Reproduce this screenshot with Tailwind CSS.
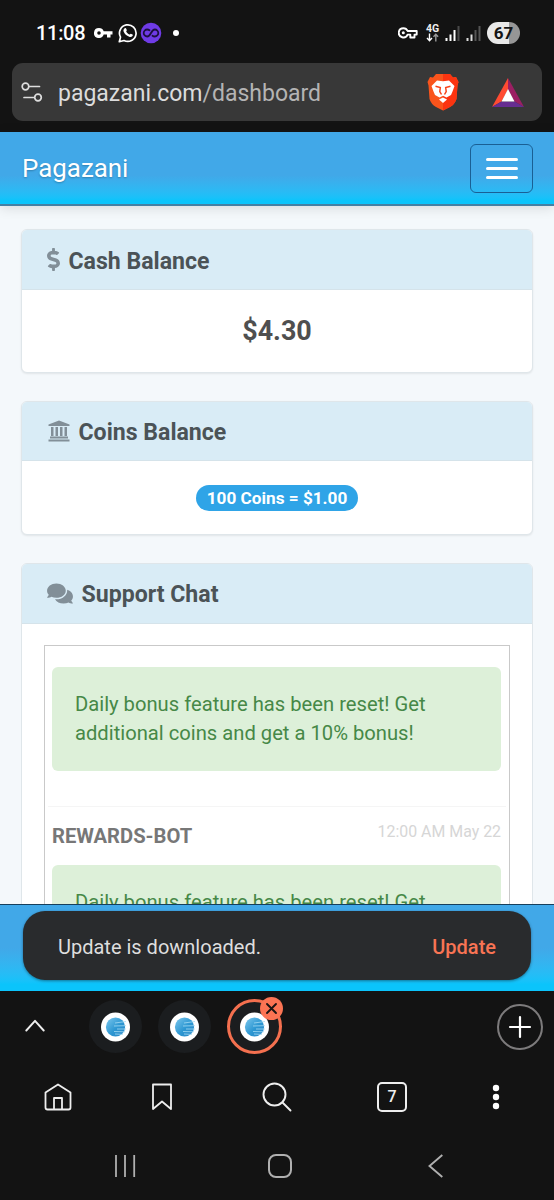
<!DOCTYPE html>
<html lang="en">
<head>
<meta charset="utf-8">
<title>Pagazani</title>
<script src="https://cdn.jsdelivr.net/npm/@tailwindcss/browser@4"></script>
</head>
<body class="w-[554px] h-[1200px] overflow-hidden bg-[#131313] font-['Roboto',sans-serif] flex flex-col whitespace-nowrap">

<svg class="absolute w-0 h-0">
  <defs>
    <linearGradient id="globe" x1="0" y1="0" x2="1" y2="1"><stop offset="0" stop-color="#7cc8ee"/><stop offset=".55" stop-color="#2d97d2"/><stop offset="1" stop-color="#2a86c6"/></linearGradient>
    <symbol id="favicon" viewBox="0 0 30 30">
      <circle cx="14.500" cy="15" r="14.500" fill="#fff"/>
      <circle cx="14.500" cy="15" r="9.600" fill="url(#globe)"/>
      <path d="M14 11l11-1.500M13 14l12-.3M16 17h9M13 19.500l11 .3M14 22l8 .4" stroke="#a5dcf4" stroke-width=".8" fill="none"/>
    </symbol>
  </defs>
</svg>

<!-- Status bar -->
<header class="h-[63px] shrink-0 flex items-center pt-[3px] pl-[36px] pr-[34px] text-white">
  <span class="text-[20px] font-medium leading-none w-[50px] tracking-[-0.3px]">11:08</span>
  <svg class="ml-[8px] w-[19px] h-[12px]" viewBox="0 0 19 12"><path fill="#fff" fill-rule="evenodd" d="M5 1a5 5 0 1 0 4.700 6.600H13V10.500H16.500V7.600H18.500V4.200H9.700A5 5 0 0 0 5 1zM5 4.200a1.800 1.800 0 1 1 0 3.600a1.800 1.800 0 0 1 0-3.600z"/></svg>
  <svg class="ml-[5px] w-[20px] h-[20px]" viewBox="0 0 20 20" fill="none"><path d="M1.300 18.700l1.200-4.600A8.300 8.300 0 1 1 6 17.500z" stroke="#fff" stroke-width="1.700" stroke-linejoin="round"/><path d="M6.700 5.300c.6-.5 1.100-.4 1.400.2l.7 1.600c.2.500-.7 1.200-.6 1.500.7 1.400 1.800 2.400 3.200 3 .4.100 1-1 1.400-.9l1.700.8c.5.300.4.900 0 1.500-.8 1-2 1.200-3.300.8-2.700-.9-4.600-2.600-5.600-5.200-.4-1.300 0-2.500 1.100-3.300z" fill="#fff"/></svg>
  <svg class="ml-[2px] w-[22px] h-[22px]" viewBox="0 0 22 22" fill="none"><circle cx="11" cy="11" r="10.300" fill="#6f3be6"/><path d="M9.500 8.200C8.800 7.700 8 7.500 7.200 7.500a3.500 3.500 0 0 0 0 7c3.800 0 3.800-7 7.600-7a3.500 3.500 0 0 1 0 7c-.8 0-1.600-.2-2.300-.7" stroke="#1d1040" stroke-width="1.800" stroke-linecap="round"/></svg>
  <span class="ml-[11px] w-[6px] h-[6px] rounded-full bg-white"></span>
  <svg class="ml-auto w-[20px] h-[12px]" viewBox="0 0 20 12" fill="none"><path d="M5.400 1.200a4.600 4.600 0 1 0 4.200 6.400H12.300V10.500H16.500V7.600H18.700V4H9.600A4.600 4.600 0 0 0 5.400 1.200z" stroke="#fff" stroke-width="1.900" stroke-linejoin="round"/><circle cx="5.300" cy="5.800" r="1.500" fill="#fff"/></svg>
  <div class="ml-[7px] w-[15px] flex flex-col items-center">
    <span class="text-[10.500px] font-bold leading-[9px] text-[#eee]">4G</span>
    <svg class="w-[13px] h-[9px]" viewBox="0 0 13 9" fill="none" stroke-width="1.400"><path d="M3.500 .5V7.500M1 5l2.500 2.700L6 5" stroke="#fff"/><path d="M9.800 8.500V1.500M7.500 3.800l2.300-2.500 2.300 2.500" stroke="#999"/></svg>
  </div>
  <svg class="ml-[5px] w-[15px] h-[15px]" viewBox="0 0 15 15"><g fill="#fff"><path d="M.500 12h2v3h-2zM4.500 8.500h2V15h-2zM8.500 4h2v11h-2z"/></g><path d="M12.500 0h2v15h-2z" fill="#4a4a4a"/></svg>
  <svg class="ml-[6px] w-[15px] h-[15px]" viewBox="0 0 15 15"><path d="M.500 12h2v3h-2zM4.500 8.500h2V15h-2z" fill="#ddd"/><path d="M8.500 4h2v11h-2zM12.500 0h2v15h-2z" fill="#555"/></svg>
  <span class="ml-[6px] w-[33px] h-[22px] rounded-full bg-linear-to-r from-[#e9e9e9] from-[68%] to-[#969696] to-[68%] text-[#151515] text-[17px] font-bold leading-[22.500px] text-center">67</span>
</header>

<!-- Address bar -->
<div class="mx-[12px] h-[58px] shrink-0 rounded-[11px] bg-[#383838] flex items-center pl-[9px] pr-[17px]">
  <svg class="w-[22px] h-[22px]" viewBox="0 0 22 22" fill="none" stroke="#dedede" stroke-width="1.700" stroke-linecap="round"><circle cx="4.500" cy="5.500" r="3.300"/><path d="M8.500 5.500H18.500M3 16.500H13"/><circle cx="17" cy="16.500" r="3.300"/></svg>
  <div class="ml-[15px] text-[23px] leading-none text-[#dcdcdc] pt-[2px]">pagazani.com<span class="text-[#b4b4b4]">/dashboard</span></div>
  <svg class="ml-auto w-[34px] h-[38px]" viewBox="0 0 34 38">
    <path d="M10 1H24L27 4.500L30 4L32.500 9L31.500 12.500L30.500 26Q29 31 24 34L17 37.500L10 34Q5 31 3.500 26L2.500 12.500L1.500 9L4 4L7 4.500Z" fill="#f9541c"/>
    <path d="M17 1H24L27 4.500L30 4L32.500 9L31.500 12.500L30.500 26Q29 31 24 34L17 37.500Z" fill="#fb3410"/>
    <path d="M11 7.500L17 8.300L23 7.500L28.500 13L26.500 18.500L25 22L20.500 24.500L17 22.800L13.500 24.500L9 22L7.500 18.500L5.500 13Z" fill="#fff"/>
    <path d="M17 24.500L21 26.500L17 30L13 26.500Z" fill="#fff"/>
    <path d="M9.500 13.200L14.300 14.500L13.800 18.500L15.500 21.500M24.500 13.200L19.700 14.500L20.200 18.500L18.500 21.500" stroke="#f8431a" stroke-width="1.500" fill="none"/>
  </svg>
  <svg class="ml-[31px] w-[34px] h-[30px] mt-[2px]" viewBox="0 0 34 30"><path d="M17 0L1 29L10.500 23.500L17 11.500Z" fill="#ff4b32"/><path d="M17 0L33 29L23.500 23.500L17 11.500Z" fill="#9b1f63"/><path d="M1 29H33L23.500 23.500H10.500Z" fill="#662d91"/><path d="M17 11L10.500 23.500H23.500Z" fill="#fff"/></svg>
</div>
<div class="h-[11px] shrink-0"></div>

<!-- Site navigation -->
<nav class="relative z-10 h-[74px] shrink-0 border-b-2 border-[#4480a4] bg-linear-to-b from-[#41a8e8] from-[60%] to-[#0bc4fb] to-[95%] flex items-center justify-between pl-[22px] pr-[21px] shadow-[0_2px_12px_rgba(0,0,0,0.12)]">
  <span class="text-[25.900px] leading-none text-white pt-px [text-shadow:0_1px_2px_rgba(0,0,0,0.25)]">Pagazani</span>
  <div class="w-[63px] h-[49px] rounded-[6px] border border-[#1a5f94] flex flex-col items-center justify-center gap-[6px]">
    <span class="w-[32px] h-[3px] rounded-full bg-white"></span>
    <span class="w-[32px] h-[3px] rounded-full bg-white"></span>
    <span class="w-[32px] h-[3px] rounded-full bg-white"></span>
  </div>
</nav>

<!-- Page content -->
<main class="h-[698px] shrink-0 overflow-hidden bg-[#f4f8fb] pl-[21px] pr-[21px] pt-[23px] flex flex-col gap-[28px]">
  <section class="h-[144px] shrink-0 rounded-[6px] border border-[#dfe6ea] bg-white shadow-[0_1px_2px_rgba(0,0,0,0.08)] overflow-hidden flex flex-col">
    <h2 class="h-[60px] shrink-0 bg-[#d9ecf6] border-b border-[#d5e3ea] flex items-center pl-[25px] text-[23.100px] font-bold text-[#4b5357] leading-none">
      <svg class="w-[13px] h-[23px]" viewBox="0 0 288 512" fill="#828f98"><path d="M209.200 233.400l-108-31.600C88.700 198.200 80 186.500 80 173.500c0-16.300 13.200-29.500 29.500-29.500h66.300c12.200 0 24.200 3.700 34.200 10.500 6.100 4.100 14.300 3.100 19.500-2l34.800-34c7.100-6.900 6.100-18.400-1.800-24.500C238 74.800 207.400 64.100 176 64V16c0-8.800-7.200-16-16-16h-32c-8.800 0-16 7.200-16 16v48h-2.500C45.800 64-5.400 118.700.5 183.600c4.200 46.100 39.400 83.600 83.800 96.600l102.500 30c12.500 3.700 21.200 15.300 21.200 28.300 0 16.300-13.200 29.500-29.500 29.500h-66.300C100 368 88 364.300 78 357.500c-6.100-4.100-14.300-3.100-19.500 2l-34.800 34c-7.100 6.900-6.100 18.400 1.800 24.500 24.500 19.200 55.100 29.900 86.500 30v48c0 8.800 7.200 16 16 16h32c8.800 0 16-7.200 16-16v-48.200c46.600-.9 90.300-28.600 105.700-72.700 21.500-61.600-14.600-124.800-72.500-141.700z"/></svg>
      <span class="ml-[8.500px] pt-[4px]">Cash Balance</span>
    </h2>
    <div class="flex-1 flex items-center justify-center text-[26.900px] font-bold leading-none text-[#4f4f4f]">$4.30</div>
  </section>

  <section class="h-[133.500px] shrink-0 rounded-[6px] border border-[#dfe6ea] bg-white shadow-[0_1px_2px_rgba(0,0,0,0.08)] overflow-hidden flex flex-col">
    <h2 class="h-[59px] shrink-0 bg-[#d9ecf6] border-b border-[#d5e3ea] flex items-center pl-[25.500px] text-[23.100px] font-bold text-[#4b5357] leading-none">
      <svg class="w-[22px] h-[22px]" viewBox="0 0 22 22" fill="#828f98"><path d="M11 .500L21.500 4.500V6H.500V4.500ZM3 7H5.500V16H3ZM7.500 7H10V16H7.500ZM12 7H14.500V16H12ZM16.500 7H19V16H16.500ZM2 16.500H20V18.500H2ZM.500 19.500H21.500V21.500H.500Z"/></svg>
      <span class="ml-[9px] pt-[3px]">Coins Balance</span>
    </h2>
    <div class="flex-1 flex items-center justify-center pt-px"><span class="w-[162px] h-[26px] rounded-full bg-[#2fa4e7] text-white text-[17.200px] font-bold leading-[26px] text-center">100 Coins = $1.00</span></div>
  </section>

  <section class="h-[500px] shrink-0 rounded-[6px] border border-[#dfe6ea] bg-white overflow-hidden flex flex-col">
    <h2 class="h-[60px] shrink-0 bg-[#d9ecf6] border-b border-[#d5e3ea] flex items-center pl-[25px] text-[23.100px] font-bold text-[#4b5357] leading-none">
      <svg class="w-[26px] h-[23px]" viewBox="0 0 576 512" fill="#828f98"><path d="M416 192c0-88.400-93.100-160-208-160S0 103.600 0 192c0 34.300 14.100 65.900 38 92-13.400 30.200-35.500 54.200-35.800 54.500-2.200 2.300-2.800 5.700-1.500 8.700S4.800 352 8 352c36.600 0 66.900-12.300 88.700-25 32.200 15.700 70.300 25 111.300 25 114.900 0 208-71.600 208-160zm122 220c23.900-26 38-57.700 38-92 0-66.900-53.500-124.200-129.300-148.100.9 6.600 1.300 13.300 1.300 20.100 0 105.900-107.700 192-240 192-10.800 0-21.300-.8-31.700-1.900C207.800 439.600 281.800 480 368 480c41 0 79.100-9.200 111.300-25 21.800 12.700 52.100 25 88.700 25 3.200 0 6.100-1.900 7.300-4.800 1.300-2.900.7-6.300-1.500-8.700-.3-.3-22.400-24.200-35.800-54.500z"/></svg>
      <span class="ml-[8.500px] pt-[3px]">Support Chat</span>
    </h2>
    <div class="mt-[21.500px] ml-[22px] mr-[22px] h-[450px] shrink-0 border border-[#c9c9c9] pt-[21px]">
      <div class="ml-[7px] mr-[8px] h-[103.500px] rounded-[6px] bg-[#ddf0d9] px-[23px] pt-[22.600px] text-[20.200px] leading-[29.500px] text-[#468847]">Daily bonus feature has been reset! Get<br>additional coins and get a 10% bonus!</div>
      <div class="mx-[3px] mt-[35.500px] h-px bg-[#f5f5f5]"></div>
      <div class="ml-[7px] mr-[8px] h-[58px] flex justify-between leading-none">
        <span class="pt-[19px] text-[20.200px] font-bold text-[#777]">REWARDS-BOT</span>
        <span class="pt-[17px] text-[15.900px] text-[#d6d6d6]">12:00 AM May 22</span>
      </div>
      <div class="ml-[7px] mr-[8px] h-[104px] rounded-[6px] bg-[#ddf0d9] px-[23px] pt-[22.600px] text-[20.200px] leading-[29.500px] text-[#468847]">Daily bonus feature has been reset! Get</div>
    </div>
  </section>
</main>

<!-- Site footer with the update snackbar -->
<footer class="h-[87px] shrink-0 border-t border-[#173f5c] bg-linear-to-b from-[#41a8e8] from-[50%] to-[#0bc4fb] to-[92%] px-[23px] pt-[6px]">
  <div class="h-[69px] rounded-[22px] bg-[#292b2d] shadow-[0_1px_3px_rgba(0,0,0,0.4)] flex items-center justify-between pl-[35px] pr-[35px] text-[20px] leading-none pt-[2px]">
    <span class="text-[#dedede]">Update is downloaded.</span>
    <span class="font-medium text-[#f87454]">Update</span>
  </div>
</footer>

<!-- Tab strip -->
<div class="h-[71px] shrink-0 flex items-center pl-[25px] pr-[11.500px]">
  <svg class="w-[20px] h-[13px] -mt-[2px]" viewBox="0 0 20 13" fill="none" stroke="#eee" stroke-width="1.900" stroke-linecap="round" stroke-linejoin="round"><path d="M1.300 11.500L10 1.800L18.700 11.500"/></svg>
  <span class="ml-[44px] w-[53px] h-[53px] rounded-full bg-[#1b1d1f] flex items-center justify-center"><svg class="w-[30px] h-[30px]"><use href="#favicon"/></svg></span>
  <span class="ml-[16px] w-[53px] h-[53px] rounded-full bg-[#1b1d1f] flex items-center justify-center"><svg class="w-[30px] h-[30px]"><use href="#favicon"/></svg></span>
  <span class="relative ml-[16px] w-[55px] h-[55px] rounded-full border-[3px] border-[#f4704f] bg-[#1b1d1f] flex items-center justify-center"><svg class="w-[30px] h-[30px]"><use href="#favicon"/></svg>
    <svg class="absolute -top-[5px] -right-[4px] w-[23px] h-[23px]" viewBox="0 0 23 23"><circle cx="11.500" cy="11.500" r="11.500" fill="#fb7453"/><path d="M7 7l9 9M16 7l-9 9" stroke="#1b1513" stroke-width="1.900" stroke-linecap="round"/></svg>
  </span>
  <svg class="ml-auto w-[46px] h-[46px]" viewBox="0 0 46 46" fill="none" stroke-linecap="round"><circle cx="23" cy="23" r="22" stroke="#7d7b7c" stroke-width="2"/><path d="M23 13V33M13 23H33" stroke="#fff" stroke-width="2.200"/></svg>
</div>

<!-- Browser toolbar -->
<div class="h-[70px] shrink-0 flex items-center pl-[44px] pr-[54px]">
  <svg class="w-[28px] h-[28px]" viewBox="0 0 28 28" fill="none" stroke="#eee" stroke-width="1.800" stroke-linejoin="round"><path d="M14 1.500L26.500 9.500V24.500Q26.500 26.500 24.500 26.500H3.500Q1.500 26.500 1.500 24.500V9.500ZM10 26V15H18V26"/></svg>
  <svg class="ml-[79.500px] w-[20px] h-[28px]" viewBox="0 0 20 28" fill="none" stroke="#eee" stroke-width="1.800" stroke-linejoin="round"><path d="M1 1.500H19V26L10 18.500L1 26Z"/></svg>
  <svg class="ml-[90.500px] w-[30px] h-[30px]" viewBox="0 0 30 30" fill="none" stroke="#eee" stroke-width="1.900" stroke-linecap="round"><circle cx="12.500" cy="12.500" r="11"/><path d="M20.500 20.500L28.500 28.500"/></svg>
  <span class="ml-[85px] w-[30px] h-[30px] rounded-[5px] border-2 border-[#eee] text-[#eee] text-[16px] font-medium leading-[26px] text-center">7</span>
  <svg class="ml-auto w-[8px] h-[26px]" viewBox="0 0 8 26" fill="#fff"><circle cx="4" cy="4" r="3.200"/><circle cx="4" cy="13" r="3.200"/><circle cx="4" cy="22" r="3.200"/></svg>
</div>

<!-- Android navigation -->
<div class="h-[68px] shrink-0 flex items-center pl-[114px] pr-[111px]">
  <svg class="w-[22px] h-[22px]" viewBox="0 0 22 22" fill="none" stroke="#b0b0b0" stroke-width="1.800"><path d="M2 0V22M11 0V22M20.200 0V22"/></svg>
  <span class="ml-[132px] w-[24px] h-[24px] rounded-[8px] border-2 border-[#b0b0b0]"></span>
  <svg class="ml-auto w-[15px] h-[24px]" viewBox="0 0 15 24" fill="none" stroke="#b0b0b0" stroke-width="1.900"><path d="M14.300 1L1.500 12L14.300 23"/></svg>
</div>
</body>
</html>
